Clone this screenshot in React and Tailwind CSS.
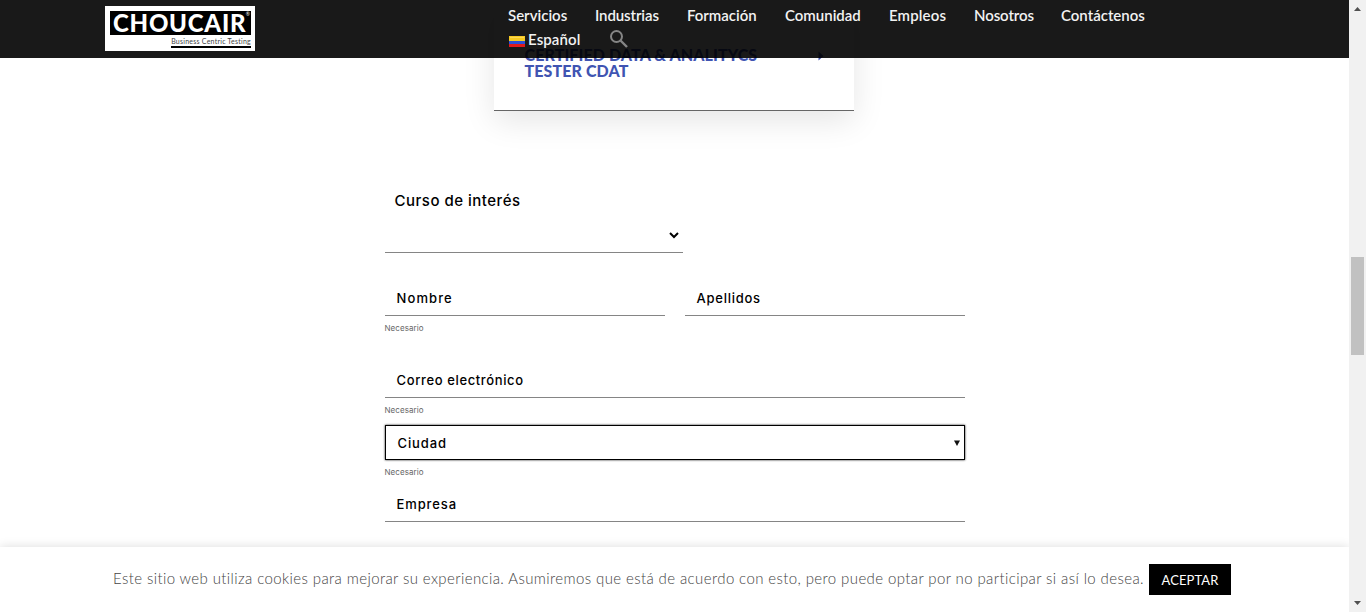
const NAV = [
  { label: "Servicios", width: "w-[59px]", fit: "tracking-[0px]" },
  { label: "Industrias", width: "w-[64px]", fit: "tracking-[-0.1px]" },
  { label: "Formación", width: "w-[70px]", fit: "tracking-[-0.02px]" },
  { label: "Comunidad", width: "w-[76px]", fit: "tracking-[0px]" },
  { label: "Empleos", width: "w-[57px]", fit: "tracking-[0.15px]" },
  { label: "Nosotros", width: "w-[59px]", fit: "tracking-[-0.1px]" },
  { label: "Contáctenos", width: "w-[84px]", fit: "tracking-[0px]" },
];

function Logo() {
  return (
    <div className="h-[45px] w-[150px] shrink-0 bg-white pl-[5px] pt-[5px] font-['Lato',sans-serif]">
      <div className="relative flex h-[24px] w-[141px] items-center bg-black pl-[3px]">
        <span className="whitespace-nowrap text-[24px] font-black leading-[24px] tracking-[0.75px] text-white">CHOUCAIR</span>
        <span className="absolute right-[1px] top-[1px] text-[5px] leading-[5px] text-white">®</span>
      </div>
      <div className="flex w-[141px] flex-col items-end">
        <span className="mt-[1px] whitespace-nowrap text-[7px] leading-[10px] tracking-[0.24px] text-[#444]">Business Centric Testing</span>
        <div className="h-[2px] w-[80px] bg-black" />
      </div>
    </div>
  );
}

function Header() {
  return (
    <header className="absolute inset-x-0 top-0 z-10 flex h-[58px] bg-black/90 pl-[105px] pt-[6px] font-['Lato',sans-serif]">
      <Logo />
      <nav className="ml-[253px] -mt-[3px] flex flex-col text-[15px] font-semibold leading-[24px] text-[#f2f2f2]">
        <div className="flex gap-[28px]">
          {NAV.map((n) => (
            <a key={n.label} className={`${n.width} ${n.fit} whitespace-nowrap`}>{n.label}</a>
          ))}
        </div>
        <div className="flex items-center">
          <svg className="ml-[1px] mr-[3px] mt-[5px] h-[11px] w-[16px]" viewBox="0 0 16 11">
            <path fill="#f5c922" d="M0 0h16v6H0z" />
            <path fill="#2a4fd6" d="M0 5h16v3H0z" />
            <path fill="#e01a1a" d="M0 8h16v3H0z" />
            <path fill="#ffe27a" opacity=".6" d="M1 1h14v1H1z" />
          </svg>
          <span className="w-[54px] whitespace-nowrap tracking-[0.1px]">Español</span>
          <svg className="ml-[28px] h-[18px] w-[18px]" viewBox="0 0 18 18" fill="none" stroke="#858585" strokeWidth="2">
            <circle cx="6.5" cy="6.5" r="5.5" />
            <path d="m10.5 10.5 6.5 6.5" strokeWidth="2.4" />
          </svg>
        </div>
      </nav>
    </header>
  );
}

function Field({ label, fit, className }) {
  return (
    <div className={`flex h-[35px] items-center border-b border-[#858585] pl-[11.5px] text-[13px] font-medium leading-[16px] text-black ${className}`}>
      <span className={`whitespace-nowrap ${fit}`}>{label}</span>
    </div>
  );
}

function Required() {
  return <p className="-ml-[0.5px] mt-[7px] h-[11px] text-[8px] leading-[10px] tracking-[0.08px] text-[#666]">Necesario</p>;
}

function CookieBar() {
  return (
    <div className="absolute inset-x-0 bottom-0 z-10 flex h-[65px] items-center bg-white pl-[113px] font-['Lato',sans-serif] shadow-[0_0_10px_rgba(0,0,0,0.14)]">
      <p className="-mt-[2px] w-[1036px] whitespace-nowrap text-[15px] font-light tracking-[0.393px] text-[#444]">
        Este sitio web utiliza cookies para mejorar su experiencia. Asumiremos que está de acuerdo con esto, pero puede optar por no participar si así lo desea.
      </p>
      <button className="h-[31px] w-[82px] bg-black pt-[2px] text-[13px] tracking-[0.1px] text-white">ACEPTAR</button>
    </div>
  );
}

function Scrollbar() {
  return (
    <div className="flex h-full w-[17px] flex-col items-center bg-[#f1f1f1]">
      <svg className="h-[17px] w-[17px]" viewBox="0 0 17 17"><path fill="#505050" d="M5 11h7L8.500 7z" /></svg>
      <div className="mt-[240px] h-[98px] w-[13px] bg-[#c1c1c1]" />
      <svg className="mt-auto h-[17px] w-[17px]" viewBox="0 0 17 17"><path fill="#505050" d="M5 6h7l-3.500 4z" /></svg>
    </div>
  );
}

export default function App() {
  return (
    <div className="flex h-[612px] w-full overflow-hidden bg-white font-['Inter',sans-serif]">
      <main className="relative flex-1 overflow-hidden">
        <Header />
        <section className="ml-[494px] flex h-[111px] w-[360px] justify-between border-b border-[#666] bg-white pl-[30.5px] pr-[30px] pt-[47px] shadow-[0_10px_30px_rgba(0,0,0,0.1)]">
          <h2 className="whitespace-nowrap font-['Lato',sans-serif] text-[16px] font-black leading-[16px] tracking-[0.1px] text-[#4054b2]">
            <span className="block">CERTIFIED DATA &amp; ANALITYCS</span>
            <span className="block">TESTER CDAT</span>
          </h2>
          <svg className="mt-[4px] h-[10px] w-[6px]" viewBox="0 0 6 10"><path fill="#4054b2" d="M0.500 0.500v9L5.500 5z" /></svg>
        </section>
        <form className="ml-[385px] mt-[80px] w-[580px]">
          <label className="block h-[20px] pl-[9.5px] text-[15px] font-medium leading-[20px] tracking-[0.5px] text-black">Curso de interés</label>
          <div className="mt-[7px] flex h-[35px] w-[298px] items-center justify-end border-b border-[#858585] pr-[4px]">
            <svg className="h-[8px] w-[10px]" viewBox="0 0 10 8" fill="none" stroke="#000" strokeWidth="2"><path d="m1 2 4 4 4-4" /></svg>
          </div>
          <div className="mt-[28px] flex gap-[20px]">
            <div>
              <Field label="Nombre" fit="tracking-[1.1px]" className="w-[280px]" />
              <Required />
            </div>
            <Field label="Apellidos" fit="tracking-[0.75px]" className="w-[280px]" />
          </div>
          <Field label="Correo electrónico" fit="tracking-[0.63px]" className="mt-[29px]" />
          <Required />
          <div className="mt-[9px] flex h-[35px] items-center justify-between border border-black pl-[11.5px] pr-[4px] text-[13px] font-medium text-black shadow-[0_0_2px_rgba(0,0,0,0.9)]">
            <span className="mt-[2px] tracking-[0.9px]">Ciudad</span>
            <svg className="h-[6px] w-[6px]" viewBox="0 0 6 6"><path fill="#111" d="M0 .5h6L3 6z" /></svg>
          </div>
          <Required />
          <Field label="Empresa" fit="tracking-[0.9px]" className="mt-[9px]" />
        </form>
        <CookieBar />
      </main>
      <Scrollbar />
    </div>
  );
}
